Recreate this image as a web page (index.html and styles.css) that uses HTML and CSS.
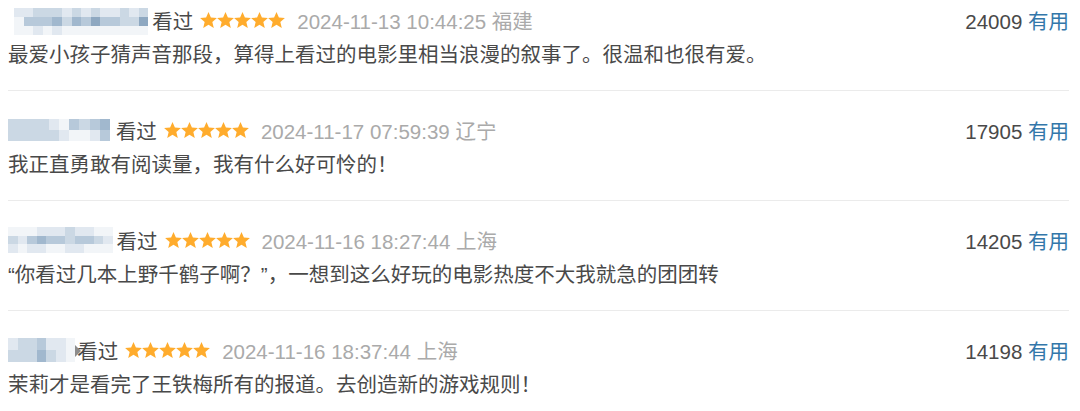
FILE: index.html
```html
<!DOCTYPE html>
<html lang="zh-CN">
<head>
  <meta charset="UTF-8">
  <title>短评</title>
  <link rel="stylesheet" href="styles.css">
</head>
<body>
  <svg class="defs" width="0" height="0">
    <symbol id="star" viewBox="1.5 1.8 21 20">
      <path d="M12 1.8l3 7 7.5.6-5.7 4.9 1.8 7.4L12 17.7l-6.6 4 1.8-7.4L1.5 9.4 9 8.8z"/>
    </symbol>
  </svg>

  <div class="comments">
    <!-- comment 1 -->
    <div class="comment">
      <div class="comment-head">
        <div class="info">
          <span class="mosaic m1">
            <i class="s1"></i><i class="s1"></i><i class="s2"></i><i class="s2"></i><i class="s2"></i><i class="s1"></i><i class="s2"></i><i class="s1"></i><i class="s2"></i><i class="s1"></i><i class="s1"></i><i class="s2"></i><i class="s1"></i><i class="s2"></i>
            <i class="s0"></i><i class="s3"></i><i class="s3"></i><i class="s3"></i><i class="s4"></i><i class="s2"></i><i class="s4"></i><i class="s3"></i><i class="s5"></i><i class="s3"></i><i class="s3"></i><i class="s2"></i><i class="s2"></i><i class="s5"></i>
            <i class="s0"></i><i class="s0"></i><i class="s1"></i><i class="s0"></i><i class="s1"></i><i class="s0"></i><i class="s0"></i><i class="s0"></i><i class="s0"></i><i class="s0"></i><i class="s0"></i><i class="s0"></i><i class="s0"></i><i class="s0"></i>
          </span>
          <span class="status">看过</span>
          <span class="stars"><svg><use href="#star"/></svg><svg><use href="#star"/></svg><svg><use href="#star"/></svg><svg><use href="#star"/></svg><svg><use href="#star"/></svg></span>
          <span class="time">2024-11-13 10:44:25 福建</span>
        </div>
        <div class="votes"><span class="count">24009</span> <a class="useful">有用</a></div>
      </div>
      <p class="content">最爱小孩子猜声音那段，算得上看过的电影里相当浪漫的叙事了。很温和也很有爱。</p>
    </div>

    <!-- comment 2 -->
    <div class="comment">
      <div class="comment-head">
        <div class="info">
          <span class="mosaic m2">
            <i class="s2"></i><i class="s2"></i><i class="s2"></i><i class="s2"></i><i class="s1"></i><i class="s0"></i><i class="s3"></i><i class="s2"></i><i class="s3"></i><i class="s4"></i>
            <i class="s2"></i><i class="s2"></i><i class="s2"></i><i class="s2"></i><i class="s2"></i><i class="s1"></i><i class="s0"></i><i class="s0"></i><i class="s1"></i><i class="s3"></i>
          </span>
          <span class="status">看过</span>
          <span class="stars"><svg><use href="#star"/></svg><svg><use href="#star"/></svg><svg><use href="#star"/></svg><svg><use href="#star"/></svg><svg><use href="#star"/></svg></span>
          <span class="time">2024-11-17 07:59:39 辽宁</span>
        </div>
        <div class="votes"><span class="count">17905</span> <a class="useful">有用</a></div>
      </div>
      <p class="content">我正直勇敢有阅读量，我有什么好可怜的！</p>
    </div>

    <!-- comment 3 -->
    <div class="comment">
      <div class="comment-head">
        <div class="info">
          <span class="mosaic m3">
            <i class="s0"></i><i class="s0"></i><i class="s0"></i><i class="s1"></i><i class="s1"></i><i class="s1"></i><i class="s2"></i><i class="s1"></i><i class="s1"></i><i class="s0"></i><i class="s0"></i>
            <i class="s2"></i><i class="s1"></i><i class="s3"></i><i class="s4"></i><i class="s3"></i><i class="s3"></i><i class="s2"></i><i class="s3"></i><i class="s3"></i><i class="s2"></i><i class="s1"></i>
            <i class="s1"></i><i class="s0"></i><i class="s1"></i><i class="s1"></i><i class="s0"></i><i class="s0"></i><i class="s1"></i><i class="s1"></i><i class="s0"></i><i class="s0"></i><i class="s0"></i>
          </span>
          <span class="status">看过</span>
          <span class="stars"><svg><use href="#star"/></svg><svg><use href="#star"/></svg><svg><use href="#star"/></svg><svg><use href="#star"/></svg><svg><use href="#star"/></svg></span>
          <span class="time">2024-11-16 18:27:44 上海</span>
        </div>
        <div class="votes"><span class="count">14205</span> <a class="useful">有用</a></div>
      </div>
      <p class="content">“你看过几本上野千鹤子啊？”，一想到这么好玩的电影热度不大我就急的团团转</p>
    </div>

    <!-- comment 4 -->
    <div class="comment">
      <div class="comment-head">
        <div class="info">
          <span class="mosaic m4">
            <i class="s1"></i><i class="s2"></i><i class="s2"></i><i class="s3"></i><i class="s1"></i><i class="s1"></i><i class="s0"></i>
            <i class="s2"></i><i class="s2"></i><i class="s2"></i><i class="s4"></i><i class="s2"></i><i class="s1"></i><i class="s0"></i>
          </span>
          <span class="arrow"></span>
          <span class="status">看过</span>
          <span class="stars"><svg><use href="#star"/></svg><svg><use href="#star"/></svg><svg><use href="#star"/></svg><svg><use href="#star"/></svg><svg><use href="#star"/></svg></span>
          <span class="time">2024-11-16 18:37:44 上海</span>
        </div>
        <div class="votes"><span class="count">14198</span> <a class="useful">有用</a></div>
      </div>
      <p class="content">茉莉才是看完了王铁梅所有的报道。去创造新的游戏规则！</p>
    </div>
  </div>
</body>
</html>
```

FILE: styles.css
```css
/* General Styles */
body {
  margin: 0;
  padding: 7px 11px 0 8px;
  background: #fff;
  color: #494949;
  font-family: "Liberation Sans", "Noto Sans CJK SC", sans-serif;
  font-size: 20.5px;
  overflow: hidden;
}

.defs {
  position: absolute;
}

.comment {
  padding: 26px 0 22px;
  border-bottom: 1px solid #ebebeb;
}

.comment:first-child {
  padding-top: 0;
}

.comment:last-child {
  border-bottom: none;
}

.comment-head {
  display: flex;
  justify-content: space-between;
  align-items: center;
  height: 26px;
}

.info {
  display: flex;
  align-items: center;
}

.status {
  color: #494949;
}

.stars {
  display: flex;
  margin: 0 12px 0 7px;
}

.stars svg {
  width: 17px;
  height: 16px;
  fill: #ffac2d;
}

.time {
  color: #aaa;
}

.count {
  color: #494949;
}

.useful {
  color: #3377aa;
}

.content {
  margin: 9px 0 0;
  line-height: 26px;
  color: #494949;
}

/* blurred user names */
.mosaic {
  display: grid;
  margin-right: 4px;
}

.mosaic i {
  display: block;
}

.m1 {
  grid-template-columns: repeat(14, 9.6px);
  grid-auto-rows: 9px;
  margin: 3px 4px 0 6px;
}

.m2 {
  grid-template-columns: repeat(10, 10.2px);
  grid-auto-rows: 11px;
  margin-right: 6px;
}

.m3 {
  grid-template-columns: repeat(11, 9.5px);
  grid-auto-rows: 8.5px;
  margin-right: 4px;
}

.m4 {
  grid-template-columns: repeat(7, 9.6px);
  grid-auto-rows: 12px;
  margin-right: 0;
}

.arrow {
  width: 0;
  height: 0;
  margin: 2px -4px 0 0;
  border-top: 6px solid transparent;
  border-bottom: 6px solid transparent;
  border-left: 6px solid #8c8c8c;
}

.s0 { background: #f2f5f8; }
.s1 { background: #e1e8f0; }
.s2 { background: #cbd8e4; }
.s3 { background: #b7c9da; }
.s4 { background: #a1b8ce; }
.s5 { background: #8ea8c1; }
```
